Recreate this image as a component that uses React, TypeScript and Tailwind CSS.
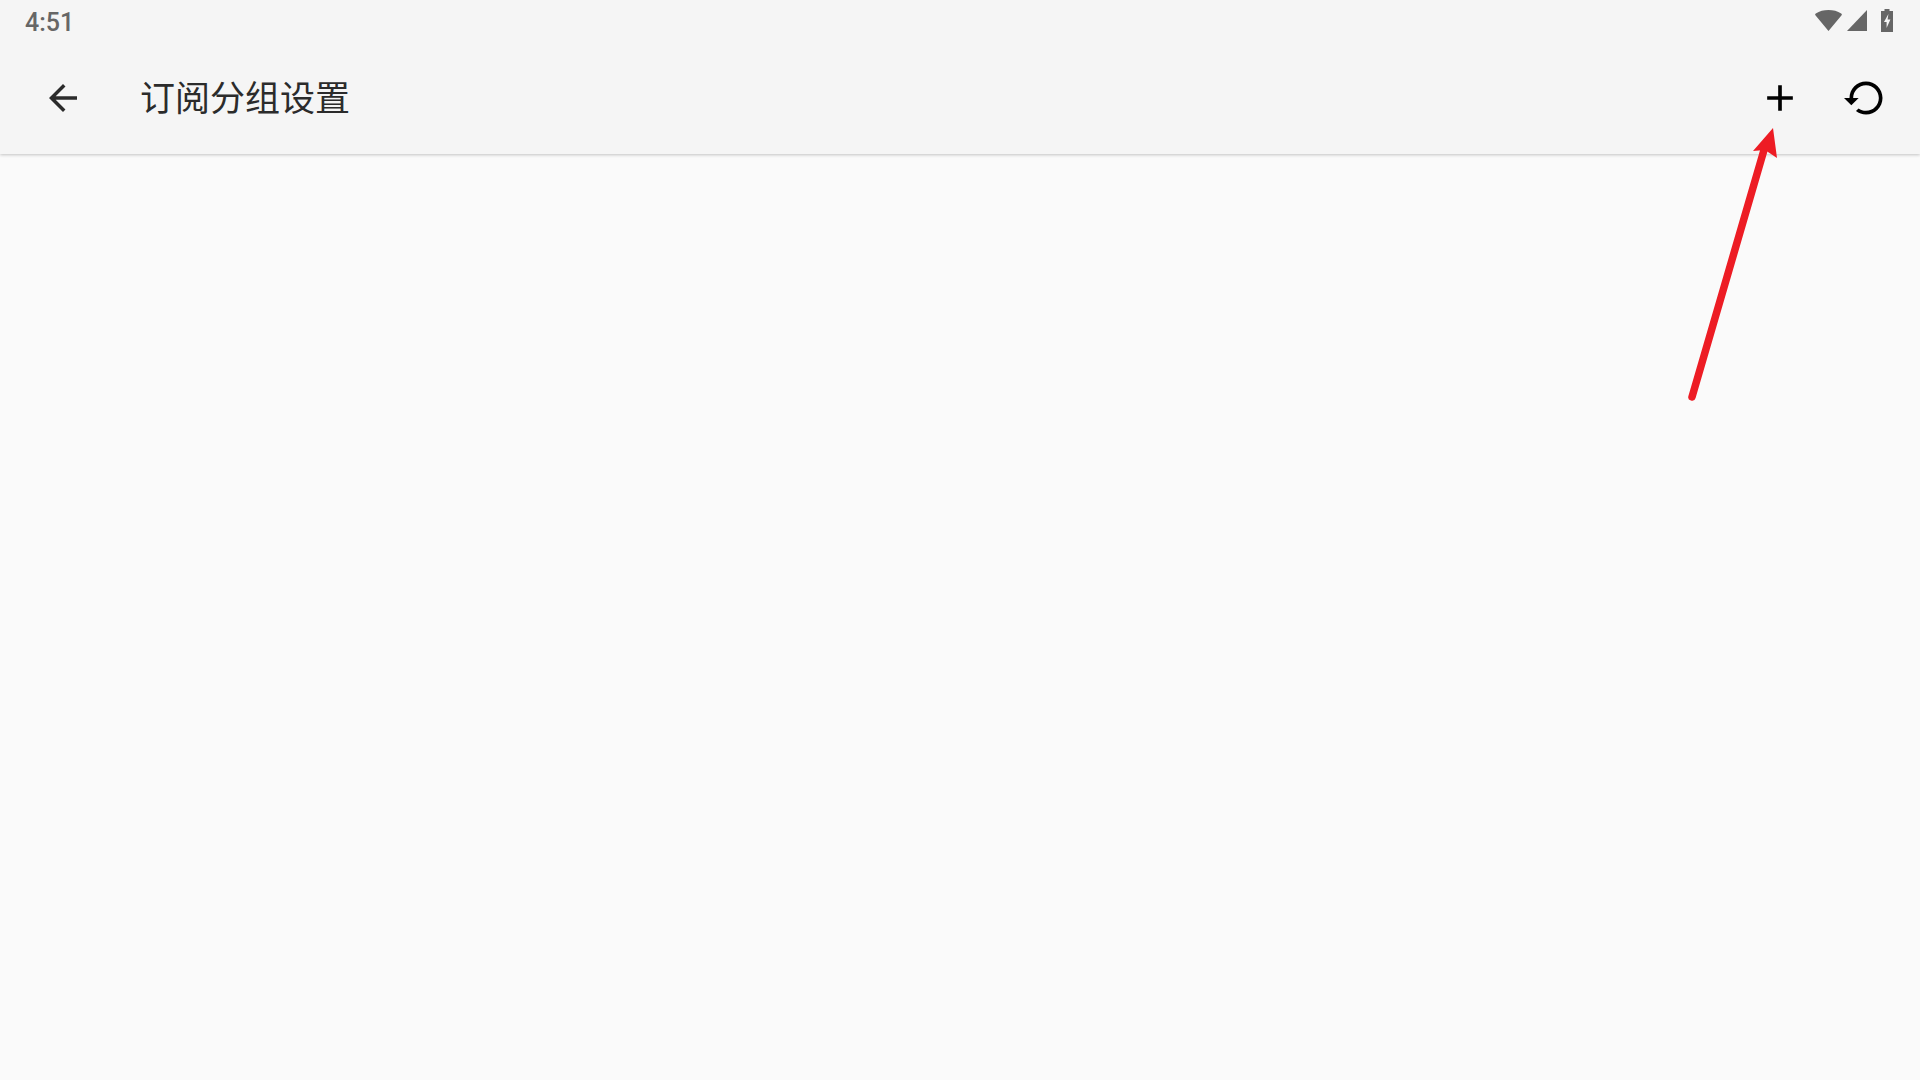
import { ReactNode } from 'react';

function Icon({ d, className }: { d: string; className: string }) {
  return (
    <svg viewBox="0 0 24 24" className={className} fill="currentColor">
      <path d={d} />
    </svg>
  );
}

const backPath = 'M20 11H7.83l5.59-5.59L12 4l-8 8 8 8 1.41-1.41L7.83 13H20v-2z';
const addPath = 'M19 13h-6v6h-2v-6H5v-2h6V5h2v6h6v2z';
const restorePath =
  'M12 3c-4.97 0-9 4.03-9 9H0l4 4 4-4H5c0-3.87 3.13-7 7-7s7 3.13 7 7-3.13 7-7 7c-1.51 0-2.91-.49-4.06-1.3l-1.42 1.44C8.04 20.3 9.94 21 12 21c4.97 0 9-4.03 9-9s-4.03-9-9-9z';

function ActionButton({ children }: { children: ReactNode }) {
  return <button className="flex h-[84px] w-[84px] items-center justify-center text-black">{children}</button>;
}

export default function App() {
  return (
    <div className="relative flex h-screen w-full flex-col overflow-hidden bg-[#fafafa] font-['Roboto','Noto_Sans_CJK_SC',sans-serif]">
      {/* Header */}
      <header className="h-[154px] shrink-0 bg-[#f5f5f5] shadow-[0_1px_3px_rgba(0,0,0,0.22)]">
        {/* Status bar */}
        <div className="flex h-[42px] items-center justify-between pl-[25px] pr-[27px] text-[#666666]">
          <span className="pt-[2px] text-[25px] font-medium leading-none">4:51</span>
          <div className="mb-[2px] flex items-center">
            <svg viewBox="0 0 27 21" className="h-[21px] w-[27px]" fill="currentColor">
              <path d="M13.5 21L.6 5.6C-.1 4.8 0 4 .8 3.4 4.4 1.1 8.8 0 13.5 0s9.1 1.1 12.7 3.4c.8.6.9 1.4.2 2.2z" />
            </svg>
            <svg viewBox="0 0 20 21" className="ml-[5px] h-[21px] w-[20px]" fill="currentColor">
              <path d="M20 0v21H0z" />
            </svg>
            <svg viewBox="0 0 12 23" className="ml-[14px] h-[23px] w-[12px]" fill="currentColor">
              <path
                fillRule="evenodd"
                d="M3.5 0h5v2H12v21H0V2h3.5zM7.4 5L3 13h2.6v6L9.4 10.6H6.6z"
              />
            </svg>
          </div>
        </div>

        {/* Toolbar */}
        <div className="flex h-[112px] items-center justify-between pl-[21px] pr-[12px]">
          <div className="flex items-center">
            <button className="flex h-[84px] w-[84px] items-center justify-center text-[#2b2b2b]">
              <Icon d={backPath} className="h-[42px] w-[42px]" />
            </button>
            <h1 className="ml-[35px] pt-[2px] text-[35px] font-normal leading-none text-[#2b2b2b]">订阅分组设置</h1>
          </div>
          <div className="flex items-center gap-[2px]">
            <ActionButton>
              <Icon d={addPath} className="h-[44px] w-[44px]" />
            </ActionButton>
            <ActionButton>
              <Icon d={restorePath} className="h-[44px] w-[44px]" />
            </ActionButton>
          </div>
        </div>
      </header>

      <main className="flex-1" />

      {/* Red annotation arrow */}
      <svg className="absolute left-[1680px] top-[120px] h-[290px] w-[110px]" viewBox="1680 120 110 290">
        <path d="M1692 397L1764 150" stroke="#ed1c24" strokeWidth="7.5" strokeLinecap="round" fill="none" />
        <path d="M1773 128L1777 158L1765 150L1753 151z" fill="#ed1c24" />
      </svg>
    </div>
  );
}
